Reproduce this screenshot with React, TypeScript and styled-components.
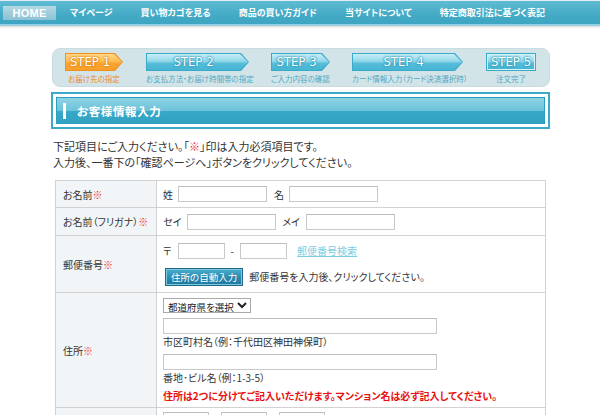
import React from "react";
import styled, { createGlobalStyle, css } from "styled-components";

const GlobalStyle = createGlobalStyle`
  html, body { margin: 0; padding: 0; background: #fff; }
  body {
    font-family: "Noto Sans CJK JP", "Noto Sans", sans-serif;
    color: #333;
    font-feature-settings: "palt" 1;
  }
`;

const Nav = styled.nav`
  height: 23px;
  border-top: 1px solid #e4eef2;
  background: linear-gradient(#60bbd3, #44aac6 60%, #3ea5c2);
  border-bottom: 2px solid #94d0e1;
  box-shadow: 0 1px 0 #e3e3e3, 0 2px 0 #f0f0f0;
  display: flex;
  align-items: center;
  padding-left: 3px;
`;

const NavItem = styled.a<{ $active?: boolean }>`
  color: #fff;
  font-size: 9px;
  font-weight: bold;
  text-decoration: none;
  line-height: 14px;
  white-space: nowrap;
  padding: 0 14px;
  ${(p) =>
    p.$active &&
    css`
      width: 53px;
      box-sizing: border-box;
      padding: 0;
      text-align: center;
      background: linear-gradient(#b5d8e4, #8cc2d4);
      font-family: "Liberation Sans", Arial, sans-serif;
      font-size: 11px;
      letter-spacing: 0.3px;
      height: 14px;
    `}
`;

const Main = styled.main`
  width: 498px;
  margin-left: 52px;
`;

const StepsPanel = styled.div`
  margin-top: 22px;
  height: 39px;
  box-sizing: border-box;
  background: #d3e4e9;
  border: 1px solid #c9dce2;
  border-radius: 8px;
  padding: 4px 0 0 12px;
  display: flex;
`;

const StepCol = styled.div<{ $w: number; $mr: number }>`
  width: ${(p) => p.$w}px;
  margin-right: ${(p) => p.$mr}px;
  display: flex;
  flex-direction: column;
`;

const arrowClip =
  "polygon(0 0, calc(100% - 8px) 0, 100% 50%, calc(100% - 8px) 100%, 0 100%)";

const StepOuter = styled.div<{ $orange?: boolean; $arrow?: boolean }>`
  height: 18px;
  padding: 1px;
  box-sizing: border-box;
  background: ${(p) => (p.$orange ? "#f0901e" : "#3aaac8")};
  clip-path: ${(p) => (p.$arrow ? arrowClip : "none")};
`;

const StepInner = styled.div<{ $orange?: boolean; $arrow?: boolean }>`
  height: 100%;
  box-sizing: border-box;
  background: ${(p) =>
    p.$orange
      ? "linear-gradient(#ffd98a, #ffbd50 45%, #f8a430 60%, #f7a02c)"
      : "linear-gradient(#c8eef7, #92d7ea 45%, #55bdd9 60%, #46b5d3)"};
  clip-path: ${(p) => (p.$arrow ? arrowClip : "none")};
  border: ${(p) => (p.$arrow ? "none" : "1px solid #d9f3f9")};
  padding-right: ${(p) => (p.$arrow ? 8 : 0)}px;
  display: flex;
  align-items: center;
  justify-content: center;
  color: #fff;
  font-family: "Liberation Sans Narrow", "DejaVu Sans Condensed", "Liberation Sans", sans-serif;
  font-size: 13px;
  line-height: 16px;
  text-shadow: 0 0 1px ${(p) => (p.$orange ? "#d8700a" : "#1b86a8")},
    0 0 2px ${(p) => (p.$orange ? "#e0800f" : "#2a98b8")},
    0 0 3px ${(p) => (p.$orange ? "#e88a1a" : "#3aa6c4")};
`;

const StepLabel = styled.div<{ $orange?: boolean; $left?: boolean }>`
  margin-top: 2px;
  font-size: 7.5px;
  line-height: 12px;
  white-space: nowrap;
  text-align: ${(p) => (p.$left ? "left" : "center")};
  color: ${(p) => (p.$orange ? "#ef8a1c" : "#4ea9c2")};
`;

const SectionHeader = styled.div`
  margin-top: 5px;
  margin-left: -1px;
  border: 2px solid #3aaac8;
  padding: 3px;
`;

const SectionBar = styled.h2`
  margin: 0;
  height: 27px;
  box-sizing: border-box;
  border: 1px solid #2d9dbd;
  background: linear-gradient(#8fd3e4, #6cc3da 50%, #37a8c8 52%, #31a2c2);
  display: flex;
  align-items: center;
  padding-left: 6px;
  color: #fff;
  font-size: 11.5px;
  font-weight: bold;
  letter-spacing: 0.6px;
  &::before {
    content: "";
    width: 3px;
    height: 16px;
    background: #fff;
    margin-right: 11px;
  }
`;

const Intro = styled.p`
  margin: 9px 0 0 1px;
  font-size: 11px;
  line-height: 16px;
  color: #333;
`;

const Req = styled.span`
  color: #f03030;
`;

const Table = styled.table`
  margin: 10px 0 0 3px;
  width: 491px;
  border-collapse: collapse;
  font-size: 10px;
  color: #333;
`;

const Th = styled.th`
  width: 101px;
  box-sizing: border-box;
  background: #f1f5f8;
  border: 1px solid #d2d2d2;
  text-align: left;
  font-weight: normal;
  padding: 0 0 0 7px;
  vertical-align: middle;
`;

const Td = styled.td<{ $pad?: string; $top?: boolean }>`
  border: 1px solid #d2d2d2;
  padding: ${(p) => p.$pad || "0 0 0 6px"};
  vertical-align: ${(p) => (p.$top ? "top" : "middle")};
`;

const Row = styled.tr<{ $h: number }>`
  height: ${(p) => p.$h}px;
`;

const Line = styled.div<{ $gap?: number; $mt?: number }>`
  display: flex;
  align-items: center;
  gap: ${(p) => p.$gap ?? 6}px;
  margin-top: ${(p) => p.$mt ?? 0}px;
  white-space: nowrap;
`;

const TextInput = styled.input<{ $w: number }>`
  width: ${(p) => p.$w}px;
  height: 16px;
  box-sizing: border-box;
  border: 1px solid #c9c9c9;
  border-top-color: #bdbdbd;
  background: #fff;
  padding: 0 2px;
  font-size: 10px;
  margin: 0;
`;

const Spaced = styled.span<{ $ml: number }>`
  margin-left: ${(p) => p.$ml}px;
`;

const LinkText = styled.a`
  color: #7fcbe0;
  text-decoration: underline;
  margin-left: 4px;
`;

const AutoButton = styled.button`
  height: 18px;
  padding: 0 5px;
  border: 1px solid #1d6687;
  background: linear-gradient(#4ab0d0, #2b8cb2 50%, #1f789e);
  box-shadow: inset 0 0 0 1px #7ccbe2;
  color: #fff;
  font-family: inherit;
  font-size: 9.5px;
  font-feature-settings: "palt" 1;
  line-height: 16px;
  margin-left: 2px;
`;

const Select = styled.select`
  height: 15px;
  font-size: 9.5px;
  font-family: inherit;
  font-feature-settings: "palt" 1;
  border: 1px solid #aaa;
  padding: 0;
  background: #fff;
  color: #222;
  display: block;
`;

const Note = styled.div<{ $mt: number }>`
  margin-top: ${(p) => p.$mt}px;
  line-height: 13px;
`;

const Warn = styled.div`
  margin-top: 5px;
  color: #e81010;
  font-weight: bold;
  line-height: 13px;
`;

const steps = [
  { t: "STEP 1", l: "お届け先の指定", w: 58, mr: 23, o: true, a: true },
  { t: "STEP 2", l: "お支払方法・お届け時間帯の指定", w: 103, mr: 22, a: true },
  { t: "STEP 3", l: "ご入力内容の確認", w: 59, mr: 22, a: true, left: true },
  { t: "STEP 4", l: "カード情報入力（カード決済選択時）", w: 111, mr: 23, a: true },
  { t: "STEP 5", l: "注文完了", w: 50, mr: 0, a: false },
];

export default function App() {
  return (
    <>
      <GlobalStyle />
      <Nav>
        <NavItem $active href="#">HOME</NavItem>
        <NavItem href="#">マイページ</NavItem>
        <NavItem href="#">買い物カゴを見る</NavItem>
        <NavItem href="#">商品の買い方ガイド</NavItem>
        <NavItem href="#">当サイトについて</NavItem>
        <NavItem href="#">特定商取引法に基づく表記</NavItem>
      </Nav>
      <Main>
        <StepsPanel>
          {steps.map((s) => (
            <StepCol key={s.t} $w={s.w} $mr={s.mr}>
              <StepOuter $orange={s.o} $arrow={s.a}>
                <StepInner $orange={s.o} $arrow={s.a}>{s.t}</StepInner>
              </StepOuter>
              <StepLabel $orange={s.o} $left={s.left}>{s.l}</StepLabel>
            </StepCol>
          ))}
        </StepsPanel>
        <SectionHeader>
          <SectionBar>お客様情報入力</SectionBar>
        </SectionHeader>
        <Intro>
          下記項目にご入力ください。「<Req>※</Req>」印は入力必須項目です。
          <br />
          入力後、一番下の「確認ページへ」ボタンをクリックしてください。
        </Intro>
        <Table>
          <tbody>
            <Row $h={27}>
              <Th>お名前<Req>※</Req></Th>
              <Td>
                <Line $gap={5}>
                  <span>姓</span>
                  <TextInput $w={89} />
                  <Spaced $ml={2}>名</Spaced>
                  <TextInput $w={89} />
                </Line>
              </Td>
            </Row>
            <Row $h={28}>
              <Th>お名前（フリガナ）<Req>※</Req></Th>
              <Td>
                <Line $gap={6}>
                  <span>セイ</span>
                  <TextInput $w={89} />
                  <span>メイ</span>
                  <TextInput $w={89} />
                </Line>
              </Td>
            </Row>
            <Row $h={57}>
              <Th>郵便番号<Req>※</Req></Th>
              <Td>
                <Line $gap={6}>
                  <span>〒</span>
                  <TextInput $w={47} />
                  <span>-</span>
                  <TextInput $w={47} />
                  <LinkText href="#">郵便番号検索</LinkText>
                </Line>
                <Line $gap={6} $mt={9}>
                  <AutoButton>住所の自動入力</AutoButton>
                  <span>郵便番号を入力後、クリックしてください。</span>
                </Line>
              </Td>
            </Row>
            <Row $h={108}>
              <Th>住所<Req>※</Req></Th>
              <Td $pad="5px 0 5px 6px">
                <Select defaultValue="">
                  <option value="">都道府県を選択</option>
                </Select>
                <Line $mt={5}>
                  <TextInput $w={274} />
                </Line>
                <Note $mt={1}>市区町村名（例：千代田区神田神保町）</Note>
                <Line $mt={6}>
                  <TextInput $w={274} />
                </Line>
                <Note $mt={1}>番地･ビル名（例：1-3-5）</Note>
                <Warn>住所は2つに分けてご記入いただけます。マンション名は必ず記入してください。</Warn>
              </Td>
            </Row>
            <Row $h={60}>
              <Th>電話番号<Req>※</Req></Th>
              <Td $pad="4px 0 6px 6px" $top>
                <Line $gap={12}>
                  <TextInput $w={46} />
                  <TextInput $w={46} />
                  <TextInput $w={46} />
                </Line>
                <Note $mt={8}>例：03-1234-5678</Note>
              </Td>
            </Row>
          </tbody>
        </Table>
      </Main>
    </>
  );
}
